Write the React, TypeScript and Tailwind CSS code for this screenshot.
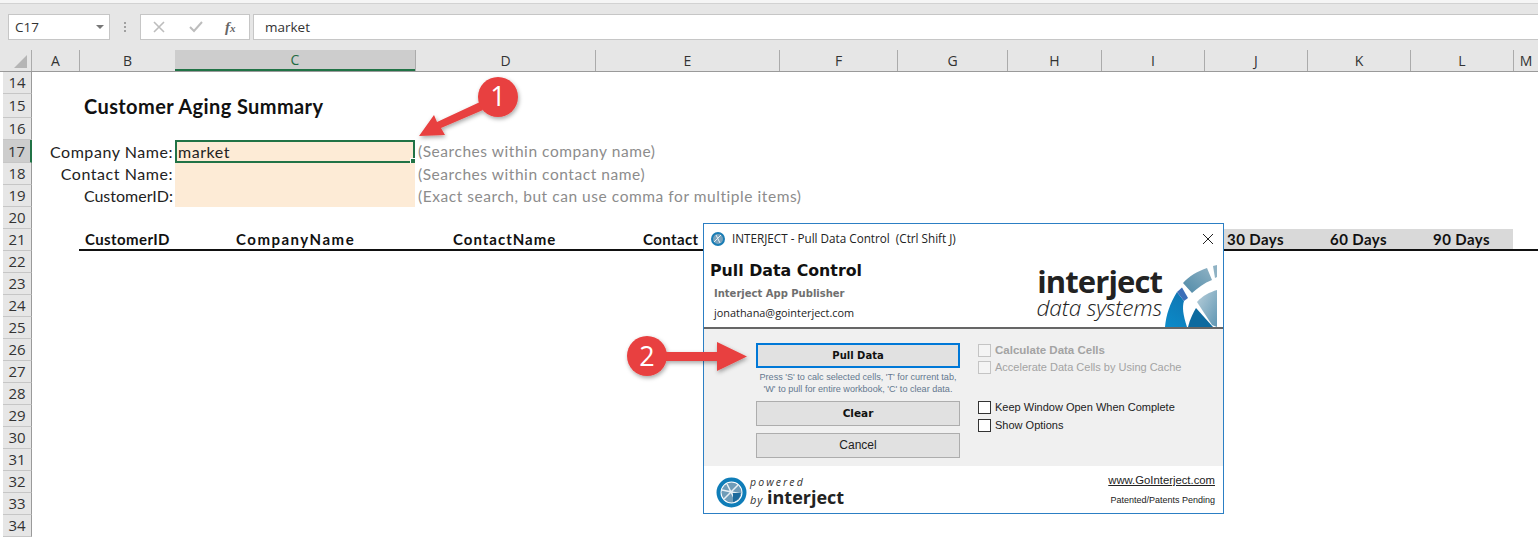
import React from 'react';

const COLUMNS = [
  { name: 'A', width: 47 },
  { name: 'B', width: 96 },
  { name: 'C', width: 240 },
  { name: 'D', width: 180 },
  { name: 'E', width: 184 },
  { name: 'F', width: 118 },
  { name: 'G', width: 110 },
  { name: 'H', width: 94 },
  { name: 'I', width: 103 },
  { name: 'J', width: 103 },
  { name: 'K', width: 103 },
  { name: 'L', width: 103 },
  { name: 'M', width: 25 },
];

const EMPTY_ROWS = [22, 23, 24, 25, 26, 27, 28, 29, 30, 31, 32, 33, 34];

const SHEET_FONT = "font-['Lato','Open_Sans',sans-serif]";
const UI_FONT = "font-['Open_Sans','Noto_Sans',sans-serif]";
const DIALOG_FONT = "font-['Liberation_Sans',Arial,sans-serif]";

const SheetRow: React.FC<{ n: number; active?: boolean; h?: string; children?: React.ReactNode }> = ({ n, active, h = 'h-[22px]', children }) => (
  <div className={`flex ${h}`}>
    <div
      className={`w-[29px] shrink-0 flex items-center justify-center border-b border-[#c6c6c6] text-[15px] leading-none text-[#333] ${UI_FONT} ${
        active ? 'bg-[#cdcdcd] border-r-2 border-r-[#217346]' : 'bg-[#e6e6e6] border-r border-r-[#9a9a9a]'
      }`}
    >
      {n}
    </div>
    <div className="flex-1 flex min-w-0 leading-none">{children}</div>
  </div>
);

const SearchRow: React.FC<{ n: number; label: string; hint: string; value?: string; active?: boolean; h?: string; labelTracking?: string }> = ({
  n,
  label,
  hint,
  value,
  active,
  h,
  labelTracking = 'tracking-[0.55px]',
}) => (
  <SheetRow n={n} active={active} h={h}>
    <div className={`w-[143px] shrink-0 flex items-center justify-end pr-[2px] text-[16px] ${labelTracking} text-[#222] ${SHEET_FONT}`}>{label}</div>
    <div
      className={`relative w-[240px] shrink-0 bg-[#fdebd6] flex items-center pl-[1px] text-[16px] tracking-[0.55px] text-[#222] ${SHEET_FONT} ${
        active ? 'border-2 border-[#217346]' : ''
      }`}
    >
      {value}
      {active && <span className="absolute right-[-3px] bottom-[-3px] w-[6px] h-[6px] bg-[#217346] border border-white" />}
    </div>
    <div className={`pl-[3px] pt-px flex items-center whitespace-nowrap text-[15.5px] tracking-[0.55px] text-[#8c8c8c] ${SHEET_FONT}`}>{hint}</div>
  </SheetRow>
);

const Check: React.FC<{ label: string; disabled?: boolean; bold?: boolean; className?: string }> = ({ label, disabled, bold, className }) => (
  <div className={`flex items-center gap-[4px] h-[13px] ${className ?? ''}`}>
    <span className={`w-[13px] h-[13px] border ${disabled ? 'border-[#c4c4c4] bg-[#f4f4f4]' : 'border-[#333] bg-white'}`} />
    <span
      className={`leading-none whitespace-nowrap ${DIALOG_FONT} ${bold ? 'font-bold text-[11.5px]' : 'text-[11px]'} ${disabled ? 'text-[#a3a3a3]' : 'text-[#222]'}`}
    >
      {label}
    </span>
  </div>
);

const BigEmblem = () => (
  <svg width="52" height="62" viewBox="0 0 52 62" className="shrink-0">
    <defs>
      <linearGradient id="ringBlue" x1="0" y1="1" x2="0.4" y2="0">
        <stop offset="0" stopColor="#0b8bc9" />
        <stop offset="1" stopColor="#0f78b5" />
      </linearGradient>
      <linearGradient id="wedge" x1="0" y1="0" x2="1" y2="1">
        <stop offset="0" stopColor="#b9cfda" />
        <stop offset="1" stopColor="#5f96b3" />
      </linearGradient>
      <linearGradient id="topSeg" x1="0" y1="1" x2="1" y2="0">
        <stop offset="0" stopColor="#4f8aa8" />
        <stop offset="1" stopColor="#8fb2c4" />
      </linearGradient>
    </defs>
    <path d="M0 62 C1 50 5 38 12 27 L19 36 C17 42 18 50 22 62 Z" fill="url(#ringBlue)" />
    <path d="M12 27 L17 22.5 L23 33 L19 36 Z" fill="#3d6fb9" />
    <path d="M18 18 C24 11 33 6 42 3 L47 15 C39 18 33 23 27 28 Z" fill="url(#topSeg)" />
    <path d="M48 1 L52 0 L52 12 L50 13 Z" fill="#8fb2c4" />
    <path d="M32 37 C37 31 45 27 52 25 L52 62 L47 60 Z" fill="url(#wedge)" />
    <path d="M23 62 C25 54 28 48 31 43 L48 62 Z" fill="#0d6a9f" />
  </svg>
);

const SmallGlobe = () => (
  <svg width="31" height="31" viewBox="0 0 31 31" className="shrink-0">
    <circle cx="15.5" cy="15.5" r="13" fill="none" stroke="#0f7db8" strokeWidth="4" />
    <circle cx="15.5" cy="15.5" r="10" fill="#6f9cb8" />
    <path d="M8 22 L22 8 M11 7 L20 25 M6 13 L25 17" stroke="#e8f0f5" strokeWidth="1.5" />
    <path d="M17 16 L25 16 A10 10 0 0 1 17 25 Z" fill="#1c6a9c" />
  </svg>
);

const TitleGlobe = () => (
  <svg width="14" height="14" viewBox="0 0 14 14" className="shrink-0">
    <circle cx="7" cy="7" r="6" fill="#7aa3bd" stroke="#1a7db5" strokeWidth="2" />
    <path d="M3 10 L10 3 M5 3 L9 11" stroke="#e8f0f5" strokeWidth="1" />
  </svg>
);

const PullDialog = () => (
  <div className="absolute left-[703px] top-[223px] w-[521px] h-[291px] bg-white border border-[#2c7fc4] flex flex-col">
    <div className="h-[29px] shrink-0 flex items-center pl-[7px] pr-[9px]">
      <TitleGlobe />
      <span className={`ml-[7px] flex-1 text-[11.7px] text-[#222] whitespace-pre ${UI_FONT}`}>INTERJECT - Pull Data Control  (Ctrl Shift J)</span>
      <svg width="12" height="12" viewBox="0 0 12 12">
        <path d="M1 1 L11 11 M11 1 L1 11" stroke="#222" strokeWidth="1" />
      </svg>
    </div>
    <div className="h-[74px] shrink-0 flex justify-between pl-[6px] pr-[6px]">
      <div>
        <div className="mt-[7px] text-[15.8px] leading-[22px] font-bold text-[#111] font-['DejaVu_Sans',sans-serif]">Pull Data Control</div>
        <div className="ml-[4px] mt-[5px] text-[10px] leading-[14px] font-bold text-[#6f6f6f] font-['DejaVu_Sans',sans-serif]">Interject App Publisher</div>
        <div className={`ml-[4px] mt-[5px] text-[10.9px] leading-[14px] text-[#222] ${UI_FONT}`}>jonathana@gointerject.com</div>
      </div>
      <div className="flex items-end gap-[3px]">
        <div className={`flex flex-col items-end mb-[7px] ${UI_FONT}`}>
          <span className="text-[31px] leading-[30px] font-bold tracking-[-0.9px] text-[#222]">interject</span>
          <span className="text-[22.7px] leading-[24px] italic font-light tracking-[-0.2px] text-[#222]">data systems</span>
        </div>
        <BigEmblem />
      </div>
    </div>
    <div className="h-[2px] shrink-0 bg-[#666]" />
    <div className="h-[137px] shrink-0 bg-[#f0f0f0] flex pl-[52px] pt-[14px]">
      <div className="w-[204px] shrink-0 flex flex-col">
        <div className="h-[25px] border-2 border-[#0078d7] bg-[#e1e1e1] flex items-center justify-center font-['DejaVu_Sans',sans-serif] text-[10px] font-bold text-[#111]">
          Pull Data
        </div>
        <div className={`mt-[3px] h-[30px] text-center text-[9.1px] leading-[12px] text-[#64788f] whitespace-nowrap ${DIALOG_FONT}`}>
          Press 'S' to calc selected cells, 'T' for current tab,
          <br />
          'W' to pull for entire workbook, 'C' to clear data.
        </div>
        <div className="h-[25px] border border-[#adadad] bg-[#e1e1e1] flex items-center justify-center font-['DejaVu_Sans',sans-serif] text-[10.5px] font-bold text-[#111]">
          Clear
        </div>
        <div className={`mt-[7px] h-[25px] border border-[#adadad] bg-[#e1e1e1] flex items-center justify-center pb-px text-[12px] leading-none text-[#222] ${DIALOG_FONT}`}>
          Cancel
        </div>
      </div>
      <div className="ml-[18px] pt-px flex flex-col">
        <Check label="Calculate Data Cells" disabled bold />
        <Check label="Accelerate Data Cells by Using Cache" disabled className="mt-[4px]" />
        <Check label="Keep Window Open When Complete" className="mt-[27px]" />
        <Check label="Show Options" className="mt-[5px]" />
      </div>
    </div>
    <div className="flex-1 flex justify-between items-start pl-[12px] pr-[8px] pt-[5px]">
      <div className="flex items-center mt-[6px]">
        <SmallGlobe />
        <div className="ml-[3px] flex flex-col">
          <span className={`text-[10.5px] leading-[11px] italic tracking-[2.1px] text-[#333] ${UI_FONT}`}>powered</span>
          <div className="flex items-baseline">
            <span className={`text-[11px] leading-[16px] italic tracking-[0.8px] text-[#333] ${UI_FONT}`}>by</span>
            <span className={`ml-[4px] text-[18px] leading-[18px] font-bold text-[#222] ${UI_FONT}`}>interject</span>
          </div>
        </div>
      </div>
      <div className={`flex flex-col items-end ${DIALOG_FONT}`}>
        <span className="mt-px text-[11.3px] leading-[16px] underline text-[#222]">www.GoInterject.com</span>
        <span className="mt-[5px] text-[9px] leading-[14px] text-[#222]">Patented/Patents Pending</span>
      </div>
    </div>
  </div>
);

const Callouts = () => (
  <svg width="1538" height="537" viewBox="0 0 1538 537" className="absolute left-0 top-0 pointer-events-none">
    <defs>
      <filter id="soft" x="-20%" y="-20%" width="140%" height="140%">
        <feDropShadow dx="1" dy="2" stdDeviation="2" floodColor="#000" floodOpacity="0.35" />
      </filter>
    </defs>
    <g filter="url(#soft)" fill="#e8403f">
      <path d="M419 136 L434 115 L437 122 L480 102 L483 110 L441 128 L445 135 Z" />
      <circle cx="498" cy="97" r="20" />
    </g>
    <g filter="url(#soft)" fill="#e8403f">
      <path d="M664 352 L717 352 L717 342 L747 356.5 L717 371 L717 361 L664 361 Z" />
      <circle cx="647" cy="356" r="20" />
    </g>
    <text x="498" y="106" textAnchor="middle" fontSize="27" fill="#fff" fontFamily="Open Sans, sans-serif">1</text>
    <text x="647" y="366" textAnchor="middle" fontSize="27" fill="#fff" fontFamily="Open Sans, sans-serif">2</text>
  </svg>
);

export default function App() {
  return (
    <div className="relative w-[1538px] h-[537px] overflow-hidden bg-white">
      {/* ribbon edge */}
      <div className="h-[14px] bg-[#e6e6e6] border-t-[3px] border-t-[#f5f5f5]">
        <div className="h-px bg-[#d2d2d2]" />
      </div>

      {/* formula bar */}
      <div className={`h-[26px] bg-[#e6e6e6] flex pl-[8px] ${UI_FONT}`}>
        <div className="w-[102px] border border-[#c6c6c6] bg-white flex items-center justify-between pl-[6px] pr-[5px] text-[13.5px] text-[#333]">
          C17
          <span className="w-0 h-0 border-x-[4px] border-x-transparent border-t-[4px] border-t-[#777]" />
        </div>
        <div className="w-[30px] flex flex-col items-center justify-center gap-[2px]">
          <span className="w-[2px] h-[2px] bg-[#a0a0a0]" />
          <span className="w-[2px] h-[2px] bg-[#a0a0a0]" />
          <span className="w-[2px] h-[2px] bg-[#a0a0a0]" />
        </div>
        <div className="w-[110px] border border-[#c6c6c6] bg-white flex items-center pl-[12px]">
          <svg width="12" height="12" viewBox="0 0 12 12">
            <path d="M1 1 L11 11 M11 1 L1 11" stroke="#bdbdbd" strokeWidth="1.6" />
          </svg>
          <svg width="14" height="12" viewBox="0 0 14 12" className="ml-[24px]">
            <path d="M1 6 L5 10 L13 1" fill="none" stroke="#bdbdbd" strokeWidth="2" />
          </svg>
          <span className="ml-[22px] text-[15px] italic font-bold text-[#666] font-['Liberation_Serif',serif]">
            f<span className="text-[11px]">x</span>
          </span>
        </div>
        <div className="ml-[3px] flex-1 border border-r-0 border-[#c6c6c6] bg-white flex items-center pl-[11px] text-[13.5px] text-[#333]">market</div>
      </div>

      <div className="h-[10px] bg-[#e6e6e6]" />

      {/* column headers */}
      <div className={`h-[22px] bg-[#e6e6e6] flex pl-[3px] border-b border-[#9a9a9a] ${UI_FONT}`}>
        <div className="w-[29px] shrink-0 flex items-end justify-end pr-[4px] pb-[3px] border-r border-[#ababab]">
          <span className="w-0 h-0 border-l-[13px] border-l-transparent border-b-[13px] border-b-[#b5b5b5]" />
        </div>
        {COLUMNS.map((c) => (
          <div
            key={c.name}
            style={{ width: c.width }}
            className={`shrink-0 flex items-center justify-center text-[14px] ${
              c.name === 'C'
                ? 'bg-[#cdcdcd] border-b-2 border-[#217346] text-[#1f6b42]'
                : c.name === 'A'
                  ? 'text-[#333]'
                  : 'border-l border-[#ababab] text-[#333]'
            }`}
          >
            {c.name}
          </div>
        ))}
      </div>

      {/* sheet */}
      <div className="pl-[3px]">
        <SheetRow n={14} />
        <SheetRow n={15} h="h-[24px]">
          <div className={`pl-[52px] flex items-center text-[20px] font-bold tracking-[0.4px] text-[#111] whitespace-nowrap ${SHEET_FONT}`}>
            Customer Aging Summary
          </div>
        </SheetRow>
        <SheetRow n={16} />
        <SearchRow n={17} h="h-[23px]" label="Company Name:" value="market" hint="(Searches within company name)" active />
        <SearchRow n={18} label="Contact Name:" hint="(Searches within contact name)" />
        <SearchRow n={19} label="CustomerID:" hint="(Exact search, but can use comma for multiple items)" labelTracking="tracking-[0px]" />
        <SheetRow n={20} />
        <SheetRow n={21}>
          <div className={`flex-1 ml-[47px] flex items-center border-b-2 border-[#111] text-[15px] font-bold tracking-[0.4px] text-[#111] whitespace-nowrap ${SHEET_FONT}`}>
            <div className="w-[96px] shrink-0 pl-[6px]">CustomerID</div>
            <div className="w-[240px] shrink-0 pl-[61px] tracking-[1.5px]">CompanyName</div>
            <div className="w-[180px] shrink-0 pl-[38px] tracking-[1px]">ContactName</div>
            <div className="w-[506px] shrink-0 pl-[48px]">Contact</div>
            <div className="w-[103px] shrink-0 self-stretch bg-[#d9d9d9]" />
            <div className="w-[103px] shrink-0 self-stretch bg-[#d9d9d9] flex items-center justify-center">30 Days</div>
            <div className="w-[103px] shrink-0 self-stretch bg-[#d9d9d9] flex items-center justify-center">60 Days</div>
            <div className="w-[103px] shrink-0 self-stretch bg-[#d9d9d9] flex items-center justify-center">90 Days</div>
            <div className="flex-1 self-stretch bg-white" />
          </div>
        </SheetRow>
        {EMPTY_ROWS.map((n) => (
          <SheetRow key={n} n={n} />
        ))}
      </div>

      <PullDialog />
      <Callouts />
    </div>
  );
}
